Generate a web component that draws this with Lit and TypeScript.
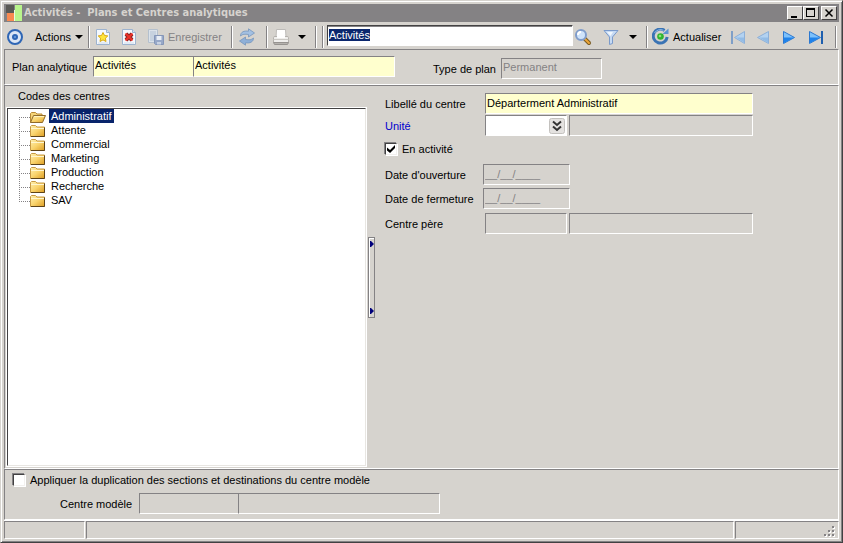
import { LitElement, html, svg, css } from "lit";
import { customElement, state, query } from "lit/decorators.js";
import { classMap } from "lit/directives/class-map.js";

const icon = (w: number, h: number, body: unknown) =>
  html`<svg width=${w} height=${h} viewBox="0 0 ${w} ${h}" aria-hidden="true">${body}</svg>`;

const logoIcon = icon(16, 16, svg`
  <rect width="8" height="8" fill="#5a5955"/><rect x="1" y="8" width="8" height="8" fill="#f98a50"/>
  <rect x="9" width="7" height="16" fill="#b9f58c"/><rect x="8" y="5" width="1" height="11" fill="#e9ffe0"/>`);
const targetIcon = icon(18, 18, svg`
  <circle cx="9" cy="9" r="7" fill="#dce6f5" stroke="#2f66b5" stroke-width="2"/>
  <circle cx="9" cy="9" r="3" fill="#2f66b5"/><circle cx="9" cy="9" r="1" fill="#6fa0e0"/>`);
const caretIcon = icon(8, 4, svg`<path d="M0 0h8L4 4z" fill="#000"/>`);
const page = svg`<path d="M.5.5h10l3 3v12H.5z" fill="#f4f8fd" stroke="#9db3cf"/>
  <path d="M10.500 .5v3h3" fill="#d5e1f0" stroke="#9db3cf"/><path d="M2 14h10" stroke="#cfdcec"/>`;
const newIcon = icon(14, 16, svg`${page}
  <path d="M7 3.500l1.500 3 3.300.4-2.400 2.300.6 3.300-3-1.600-3 1.600.6-3.300-2.400-2.300 3.300-.4z" fill="#ffe53b" stroke="#d9a917"/>`);
const deleteIcon = icon(14, 16, svg`${page}
  <path d="M4 5l6 6M10 5l-6 6" stroke="#8c2522" stroke-width="4"/><path d="M3.500 4.500l7 7M10.500 4.500l-7 7" stroke="#ec322b" stroke-width="2"/>`);
const saveIcon = icon(16, 16, svg`
  <path d="M.5.500h9v13h-9z" fill="#dbe2ea" stroke="#b4c0ce"/>
  <path d="M2 3h6M2 5h6M2 7h5M2 9h4M2 11h4" stroke="#b2c1d4"/>
  <path d="M6.500 6.500h9v9h-8l-1-1z" fill="#97a8c8" stroke="#8596b8"/>
  <path d="M8.500 7h5v4h-5z" fill="#e8edf5"/><path d="M9 13h4v2.500H9z" fill="#c8d2e3"/>`);
const syncIcon = icon(16, 18, svg`
  <path d="M1.500 8C1.500 4 5 2.500 9.500 3.200V.8L15.500 5 9.500 9V6.500C6 6 3.500 6 1.500 8z" fill="#a3c0e2" stroke="#7695bd" stroke-width=".8"/>
  <path d="M14.500 10c0 4-3.500 5.500-8 4.800v2.400L.5 13l6-4v2.500c3.500.5 6 .5 8-1.500z" fill="#8fb0d8" stroke="#7695bd" stroke-width=".8"/>`);
const printIcon = icon(18, 18, svg`
  <path d="M4.500 1.500h9l.5 8H4z" fill="#fff" stroke="#bdbbb8"/>
  <path d="M1.500 9.500q0-1 1.500-1h12q1.500 0 1.500 1v5h-15z" fill="#efeeec" stroke="#b4b1ad"/>
  <path d="M5 8h8v2H5z" fill="#fff"/><path d="M1.500 11.500h15" stroke="#cbc9c5"/>
  <path d="M1.500 14.500h15l-1 2h-13z" fill="#b5b2ae" stroke="#969390"/>`);
const searchIcon = icon(18, 18, svg`
  <path d="M10 10l5 5" stroke="#7a5b21" stroke-width="4" stroke-linecap="round"/>
  <path d="M11 11l4 4" stroke="#eea63a" stroke-width="2" stroke-linecap="round"/>
  <circle cx="7" cy="7" r="5" fill="#cfe3fa" stroke="#7f9ccb" stroke-width="2"/>
  <path d="M4 7q0-3 3-3" fill="none" stroke="#fff" stroke-width="2"/>`);
const filterIcon = icon(16, 16, svg`
  <path d="M1 1.500h14L9.500 8v6.500l-3 1V8z" fill="#c6daf3" stroke="#7a9acb"/>
  <path d="M4 3h6L7.500 7z" fill="#f0f6fd"/>`);
const refreshIcon = icon(17, 17, svg`
  <path d="M12.500 2.500A7 7 0 1 0 15.200 9" fill="none" stroke="#3a73b4" stroke-width="3"/>
  <path d="M11.500 2.300A7 7 0 0 0 2.500 5" fill="none" stroke="#8dbbe8" stroke-width="1"/>
  <path d="M10.500 6h6V.5z" fill="#5b93d0"/><circle cx="8.500" cy="8.500" r="3.300" fill="#2fb52f"/><circle cx="8" cy="8" r="1.300" fill="#8be27a"/>`);
const firstIcon = icon(16, 16, svg`<path d="M2 2v13" stroke="#7f9fc8" stroke-width="2"/>
  <path d="M14.500 2.500v12L4.500 8.500z" fill="#b3d2f1" stroke="#8db0d9"/><path d="M14 8.500v5l-8-5z" fill="#93bce6"/>`);
const prevIcon = icon(14, 16, svg`<path d="M12.500 2.500v12L1.500 8.500z" fill="#b3d2f1" stroke="#8db0d9"/><path d="M12 8.500v5l-9-5z" fill="#93bce6"/>`);
const nextIcon = icon(14, 16, svg`<path d="M1.500 2.500v12l11-6z" fill="#7cc0fb" stroke="#2c78d0"/><path d="M2 8.500v5.500l10-5.500z" fill="#1f82ea"/>`);
const lastIcon = icon(16, 16, svg`<path d="M1.500 2.500v12l11-6z" fill="#7cc0fb" stroke="#2c78d0"/>
  <path d="M2 8.500v5.500l10-5.500z" fill="#1f82ea"/><path d="M14 2v13" stroke="#1e5fae" stroke-width="2"/>`);
const folderDefs = svg`<defs>
  <linearGradient id="f" x1="0" y1="0" x2="1" y2="1"><stop offset="0" stop-color="#fff0b0"/><stop offset=".5" stop-color="#f9d36c"/><stop offset="1" stop-color="#dc9c22"/></linearGradient></defs>`;
const folderIcon = icon(16, 14, svg`${folderDefs}
  <path d="M.5 12.500v-10l1-1h4l1.500 1.500h7.500v9.500z" fill="url(#f)" stroke="#c79a45"/>
  <path d="M1 4.500h13" stroke="#fff6cf"/><path d="M1 12.500h13.500v-9" fill="none" stroke="#5c431a"/>`);
const folderOpenIcon = icon(16, 14, svg`${folderDefs}
  <path d="M.5 12.500v-9l1-1h4l1.500 1.500h5v3" fill="#f5d478" stroke="#b98a35"/>
  <path d="M3.500 5.500h12l-3 7H.5z" fill="url(#f)" stroke="#8e6a2c"/><path d="M4 6.500h10" stroke="#fff3c0"/>`);
const chevronsIcon = icon(16, 16, svg`
  <rect x=".5" y=".5" width="15" height="15" rx="2" fill="#e4e2e0" stroke="#c3c1be"/>
  <path d="M4 3.500l4 3.500 4-3.500M4 8.500l4 3.500 4-3.500" fill="none" stroke="#333" stroke-width="2"/>`);
const gripIcon = icon(12, 12, svg`
  <path d="M9 1h2v2H9zM5 5h2v2H5zM9 5h2v2H9zM1 9h2v2H1zM5 9h2v2H5zM9 9h2v2H9z" fill="#fff"/>
  <path d="M8 0h2v2H8zM4 4h2v2H4zM8 4h2v2H8zM0 8h2v2H0zM4 8h2v2H4zM8 8h2v2H8z" fill="#848284"/>`);
const arrowIcon = icon(4, 6, svg`<path d="M0 0h1l3 3-3 3H0z" fill="#00007b"/>`);

@customElement("app-root")
export class AppRoot extends LitElement {
  @state() private selected = "Administratif";
  @query(".search") private search!: HTMLInputElement;

  private centres = ["Administratif", "Attente", "Commercial", "Marketing", "Production", "Recherche", "SAV"];

  firstUpdated() {
    this.search.focus();
    this.search.select();
  }

  static styles = css`
    :host {
      display: block;
      font: 11px/14px "Liberation Sans", Arial, sans-serif;
      color: #000;
    }
    * { box-sizing: border-box; }
    svg { display: block; flex: none; }
    button, input, select { font: inherit; color: inherit; margin: 0; border-radius: 0; }
    .window {
      display: flex;
      flex-direction: column;
      min-height: 100vh;
      background: #d6d3ce;
      border: 1px solid;
      border-color: #d6d3ce #424142 #424142 #d6d3ce;
      box-shadow: inset 1px 1px #fff, inset -1px -1px #848284;
      padding: 3px;
    }
    .title {
      display: flex;
      align-items: center;
      height: 18px;
      padding: 0 2px 0 2px;
      background: #848284;
      color: #d6d3ce;
    }
    .title h1 {
      flex: 1;
      margin: 0;
      padding-left: 2px;
      font: bold 11px/14px "DejaVu Sans Condensed", Tahoma, sans-serif;
    }
    .win-btn {
      width: 16px;
      height: 14px;
      padding: 0;
      border: 1px solid;
      border-color: #fff #424142 #424142 #fff;
      background: #d6d3ce;
    }
    .close { margin-left: 2px; }
    .toolbar {
      display: flex;
      align-items: center;
      height: 27px;
      padding: 2px 2px 0 2px;
    }
    .tool {
      display: flex;
      align-items: center;
      justify-content: center;
      gap: 4px;
      flex: none;
      height: 22px;
      padding: 0 4px;
      border: 0;
      background: none;
    }
    .tool:disabled, .muted { color: #848284; }
    .flush { padding: 0; }
    .wide { padding: 0 6px; }
    .actions { width: 64px; justify-content: space-between; padding: 0 8px 0 11px; }
    .save { width: 84px; justify-content: start; padding: 0 6px; }
    .refresh { width: 78px; justify-content: start; }
    .sep {
      flex: none;
      width: 2px;
      height: 22px;
      border-left: 1px solid #848284;
      border-right: 1px solid #fff;
    }
    .gap { margin-left: 5px; }
    .panel {
      border: 1px solid;
      border-color: #848284 #fff #fff #848284;
    }
    .field {
      height: 21px;
      min-width: 0;
      padding: 0 1px 2px 1px;
      border: 1px solid;
      border-color: #848284 #fff #fff #848284;
      background: #d6d3ce;
      outline: none;
    }
    .filled { background: #ffffce; }
    .search {
      flex: 1;
      height: 21px;
      margin: 0 1px 2px 3px;
      background: #fff;
      border-color: #424142 #fff #fff #424142;
      box-shadow: inset 0 1px #848284;
    }
    .search::selection { background: rgba(8, 36, 107, 0.99); color: #fff; }
    .plan {
      display: flex;
      align-items: center;
      height: 36px;
      padding: 0 7px 2px;
    }
    .plan label { flex: none; width: 81px; padding-top: 2px; }
    .plan .code { width: 100px; border-right: 0; }
    .plan .name { width: 202px; }
    .plan .type { width: 68px; margin: 4px 0 0 38px; }
    .plan .kind { width: 101px; margin-top: 4px; }
    .main {
      display: flex;
      flex: 1;
      padding: 0 1px 0 1px;
    }
    .left {
      display: flex;
      flex-direction: column;
      flex: 0 1 361px;
      min-width: 200px;
      padding-bottom: 1px;
    }
    .left h2 { margin: 0; padding: 3px 0 4px 12px; font: inherit; }
    .tree {
      flex: 1;
      margin: 0;
      padding: 0 0 0 11px;
      list-style: none;
      background: #fff;
      border: 2px solid;
      border-color: #424142 #e8e6e2 #e8e6e2 #424142;
      outline: 1px solid #fff;
      outline-offset: -1px;
    }
    .node {
      display: flex;
      align-items: center;
      height: 14px;
      cursor: default;
    }
    .node::before {
      content: "";
      align-self: stretch;
      width: 11px;
      background:
        repeating-linear-gradient(90deg, #848284 0 1px, transparent 1px 2px) 0 8px / 11px 1px no-repeat,
        repeating-linear-gradient(#848284 0 1px, transparent 1px 2px) 0 0 / 1px 14px no-repeat;
    }
    .node:first-child::before {
      background:
        repeating-linear-gradient(90deg, #848284 0 1px, transparent 1px 2px) 0 8px / 11px 1px no-repeat,
        repeating-linear-gradient(#848284 0 1px, transparent 1px 2px) 0 8px / 1px 6px no-repeat;
    }
    .node:last-child::before {
      background:
        repeating-linear-gradient(90deg, #848284 0 1px, transparent 1px 2px) 0 8px / 11px 1px no-repeat,
        repeating-linear-gradient(#848284 0 1px, transparent 1px 2px) 0 0 / 1px 8px no-repeat;
    }
    .node svg { margin-top: 2px; }
    .node span { margin-left: 3px; padding: 0 2px; }
    .on span { background: #08246b; color: #fff; }
    .splitter {
      display: flex;
      flex-direction: column;
      align-items: flex-end;
      justify-content: space-between;
      align-self: center;
      width: 7px;
      height: 81px;
      margin: 0 0 0 1px;
      padding: 3px 0;
      border: 1px solid #848284;
      box-shadow: inset 1px 1px #fff;
    }
    .form {
      display: grid;
      grid-template-columns: 98px minmax(0, 270px);
      grid-template-rows: 22px 22px 27px 24px 25px 21px;
      align-content: start;
      flex: 1;
      padding: 7px 0 0 10px;
    }
    .form label { align-self: start; padding-top: 4px; }
    .unit { color: #0000ce; }
    .pair { display: flex; align-items: start; gap: 2px; padding-left: 2px; }
    .pair .grow { flex: 1; }
    .pair .short { flex: none; width: 82px; }
    .combo { position: relative; flex: none; width: 82px; height: 21px; }
    .combo select {
      appearance: none;
      width: 100%;
      background: #fff;
    }
    .combo svg { position: absolute; top: 3px; right: 2px; pointer-events: none; }
    .date { width: 87px; color: #848284; }
    .check { display: flex; align-items: center; gap: 5px; }
    .form .check { grid-column: 1 / -1; padding: 5px 0 0; }
    .check input {
      appearance: none;
      display: grid;
      place-content: center;
      width: 12px;
      height: 12px;
      background: #fff;
      border: 1px solid;
      border-color: #424142 #f2f0ee #f2f0ee #424142;
      box-shadow: -1px -1px #848284, 1px 1px #fff;
    }
    .check input:checked::before {
      content: "";
      width: 8px;
      height: 8px;
      background: #000;
      clip-path: polygon(0 30%, 38% 62%, 100% 0, 100% 38%, 38% 100%, 0 68%);
    }
    .bottom { height: 51px; padding: 3px 8px 0; }
    .model { display: flex; align-items: center; padding: 6px 0 0 47px; }
    .model label { width: 79px; }
    .model .code { width: 99px; border-right: 0; }
    .model .name { width: 202px; }
    .status { display: flex; gap: 1px; height: 19px; border-top: 1px solid #fff; }
    .cell { flex: 0 0 81px; }
    .fill { flex: 1; }
    .last { display: flex; align-items: end; justify-content: end; flex: 0 0 104px; padding: 0 2px 0 0; }
  `;

  render() {
    return html`
      <main class="window">
        <header class="title">
          ${logoIcon}
          <h1>Activités -&nbsp; Plans et Centres analytiques</h1>
          <button class="win-btn" aria-label="Réduire">${icon(14, 12, svg`<path d="M3 9h6v2H3z"/>`)}</button>
          <button class="win-btn" aria-label="Agrandir">${icon(14, 12, svg`<path d="M2 1h9v9H2zM3 3v6h7V3z" fill-rule="evenodd"/>`)}</button>
          <button class="win-btn close" aria-label="Fermer">${icon(14, 12, svg`<path d="M3.500 2.500l7 7M10.500 2.500l-7 7" stroke="#000" stroke-width="1.500"/>`)}</button>
        </header>

        <nav class="toolbar" aria-label="Barre d'outils">
          <button class="tool flush" aria-label="Cible">${targetIcon}</button>
          <button class="tool actions">Actions ${caretIcon}</button>
          <span class="sep"></span>
          <button class="tool wide" aria-label="Nouveau">${newIcon}</button>
          <button class="tool wide" aria-label="Supprimer">${deleteIcon}</button>
          <button class="tool save" disabled>${saveIcon} Enregistrer</button>
          <span class="sep gap"></span>
          <button class="tool wide" disabled aria-label="Synchroniser">${syncIcon}</button>
          <span class="sep gap"></span>
          <button class="tool" aria-label="Imprimer">${printIcon}</button>
          <button class="tool" aria-label="Options d'impression">${caretIcon}</button>
          <span class="sep gap"></span>
          <span class="sep gap"></span>
          <input class="field search" aria-label="Recherche" value="Activités" />
          <button class="tool flush" aria-label="Rechercher">${searchIcon}</button>
          <button class="tool wide gap" aria-label="Filtrer">${filterIcon}</button>
          <button class="tool" aria-label="Options de filtre">${caretIcon}</button>
          <span class="sep gap"></span>
          <button class="tool refresh">${refreshIcon} Actualiser</button>
          <button class="tool" disabled aria-label="Premier">${firstIcon}</button>
          <button class="tool wide" disabled aria-label="Précédent">${prevIcon}</button>
          <button class="tool wide" aria-label="Suivant">${nextIcon}</button>
          <button class="tool wide" aria-label="Dernier">${lastIcon}</button>
          <span class="sep gap"></span>
        </nav>

        <section class="panel plan">
          <label for="plan">Plan analytique</label>
          <input id="plan" class="field filled code" value="Activités" />
          <input class="field filled name" aria-label="Libellé du plan" value="Activités" />
          <label class="type" for="kind">Type de plan</label>
          <input id="kind" class="field kind muted" value="Permanent" readonly />
        </section>

        <section class="panel main">
          <div class="left">
            <h2 id="codes">Codes des centres</h2>
            <ul class="tree" role="tree" aria-labelledby="codes">
              ${this.centres.map((c) => {
                const on = c === this.selected;
                return html`<li
                  class=${classMap({ node: true, on })}
                  role="treeitem"
                  aria-selected=${on}
                  @click=${() => (this.selected = c)}
                >${on ? folderOpenIcon : folderIcon}<span>${c}</span></li>`;
              })}
            </ul>
          </div>
          <div class="splitter" role="separator" aria-orientation="vertical">${arrowIcon}${arrowIcon}</div>
          <form class="form">
            <label for="label">Libellé du centre</label>
            <div class="pair"><input id="label" class="field filled grow" value="Départerment Administratif" /></div>
            <label class="unit" for="unit">Unité</label>
            <div class="pair">
              <div class="combo"><select id="unit" class="field"><option></option></select>${chevronsIcon}</div>
              <input class="field grow" aria-label="Libellé de l'unité" readonly />
            </div>
            <label class="check"><input type="checkbox" checked />En activité</label>
            <label for="open">Date d'ouverture</label>
            <input id="open" class="field date" value="__/__/____" readonly />
            <label for="closed">Date de fermeture</label>
            <input id="closed" class="field date" value="__/__/____" readonly />
            <label for="parent">Centre père</label>
            <div class="pair">
              <input id="parent" class="field short" readonly />
              <input class="field grow" aria-label="Libellé du centre père" readonly />
            </div>
          </form>
        </section>

        <section class="panel bottom">
          <label class="check"><input type="checkbox" />Appliquer la duplication des sections et destinations du centre modèle</label>
          <div class="model">
            <label for="model">Centre modèle</label>
            <input id="model" class="field code" readonly />
            <input class="field name" aria-label="Libellé du centre modèle" readonly />
          </div>
        </section>

        <footer class="status">
          <div class="panel cell"></div>
          <div class="panel fill"></div>
          <div class="panel last">${gripIcon}</div>
        </footer>
      </main>
    `;
  }
}
